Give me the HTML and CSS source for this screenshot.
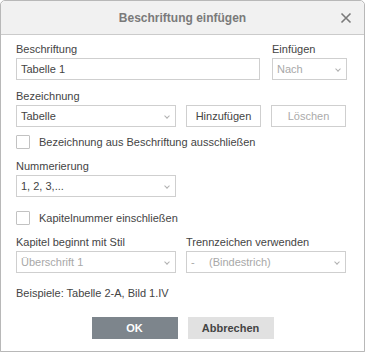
FILE: index.html
```html
<!DOCTYPE html>
<html lang="de">
<head>
    <meta charset="UTF-8">
    <title>Beschriftung einfügen</title>
    <link rel="stylesheet" href="styles.css">
</head>
<body>
    <div class="dialog">
        <div class="header">
            <div class="title">Beschriftung einfügen</div>
            <svg class="close" width="12" height="12" viewBox="0 0 12 12">
                <path d="M1.5 1.5 L10.5 10.5 M10.5 1.5 L1.5 10.5" stroke="#7a7a7a" stroke-width="1.6" fill="none"/>
            </svg>
        </div>

        <div class="body">
            <div class="row row-caption">
                <div class="field">
                    <div class="label">Beschriftung</div>
                    <div class="input">Tabelle 1</div>
                </div>
                <div class="field">
                    <div class="label">Einfügen</div>
                    <div class="input select disabled">Nach</div>
                </div>
            </div>

            <div class="row row-half row-name">
                <div class="field">
                    <div class="label">Bezeichnung</div>
                    <div class="input select">Tabelle</div>
                </div>
                <div class="btn-pair">
                    <div class="button">Hinzufügen</div>
                    <div class="button disabled">Löschen</div>
                </div>
            </div>

            <label class="check"><span class="box"></span>Bezeichnung aus Beschriftung ausschließen</label>

            <div class="row row-half row-number">
                <div class="field">
                    <div class="label">Nummerierung</div>
                    <div class="input select">1, 2, 3,...</div>
                </div>
            </div>

            <label class="check"><span class="box"></span>Kapitelnummer einschließen</label>

            <div class="row row-half">
                <div class="field">
                    <div class="label">Kapitel beginnt mit Stil</div>
                    <div class="input select disabled">Überschrift 1</div>
                </div>
                <div class="field">
                    <div class="label">Trennzeichen verwenden</div>
                    <div class="input select disabled"><span class="sep">-</span>(Bindestrich)</div>
                </div>
            </div>

            <div class="example">Beispiele: Tabelle 2-A, Bild 1.IV</div>
        </div>

        <div class="footer">
            <div class="action primary">OK</div>
            <div class="action">Abbrechen</div>
        </div>
    </div>
</body>
</html>
```

FILE: styles.css
```css
body {
    margin: 0;
    background: #fff;
    font-family: "Liberation Sans", Arial, sans-serif;
    font-size: 11px;
    color: #444;
}
.dialog {
    width: 363px;
    height: 350px;
    border: 1px solid #b8b8b8;
    border-radius: 5px 5px 0 0;
    box-shadow: 0 1px 0 #d0d0d0;
    background: #fff;
    display: flex;
    flex-direction: column;
}
.header {
    position: relative;
    height: 33px;
    background: #f1f1f1;
    border-bottom: 1px solid #cbcbcb;
    border-radius: 5px 5px 0 0;
    display: flex;
    align-items: center;
    justify-content: center;
}
.title {
    font-size: 12px;
    font-weight: bold;
    color: #7a7a7a;
}
.close {
    position: absolute;
    right: 12px;
    top: 11px;
}
.body {
    padding: 8px 17px 0 15px;
    display: flex;
    flex-direction: column;
}
.row {
    display: grid;
    gap: 10px;
    margin-bottom: 10px;
}
.row-caption {
    grid-template-columns: 244px 1fr;
    column-gap: 12px;
}
.row-half {
    grid-template-columns: 160px 160px;
}
.row-name {
    margin-bottom: 8px;
}
.row-number {
    margin-bottom: 14px;
}
.label {
    line-height: 13px;
    margin-bottom: 2px;
}
.input {
    position: relative;
    height: 20px;
    line-height: 20px;
    border: 1px solid #cfcfcf;
    padding: 0 4px;
    background: #fff;
}
.select::after {
    content: "";
    position: absolute;
    right: 6px;
    top: 8px;
    width: 3px;
    height: 3px;
    border-right: 1px solid #b0b0b0;
    border-bottom: 1px solid #b0b0b0;
    transform: rotate(45deg);
}
.disabled {
    color: #a8a8a8;
}
.sep {
    display: inline-block;
    width: 18px;
}
.btn-pair {
    align-self: end;
    display: grid;
    grid-template-columns: 1fr 1fr;
    gap: 10px;
}
.button {
    height: 20px;
    line-height: 20px;
    border: 1px solid #cfcfcf;
    text-align: center;
    background: #fff;
}
.button.disabled {
    color: #aaa;
}
.check {
    display: flex;
    align-items: center;
    gap: 9px;
    height: 14px;
    margin: 0 0 11px;
}
.box {
    width: 12px;
    height: 12px;
    border: 1px solid #c2c2c2;
    border-radius: 1px;
}
.example {
    margin-top: 4px;
    line-height: 13px;
}
.footer {
    margin-top: auto;
    margin-bottom: 12px;
    display: flex;
    justify-content: center;
    gap: 10px;
}
.action {
    width: 86px;
    height: 22px;
    line-height: 22px;
    text-align: center;
    font-weight: bold;
    background: #e1e1e1;
    color: #444;
}
.action.primary {
    background: #7d858c;
    color: #fff;
}
```
